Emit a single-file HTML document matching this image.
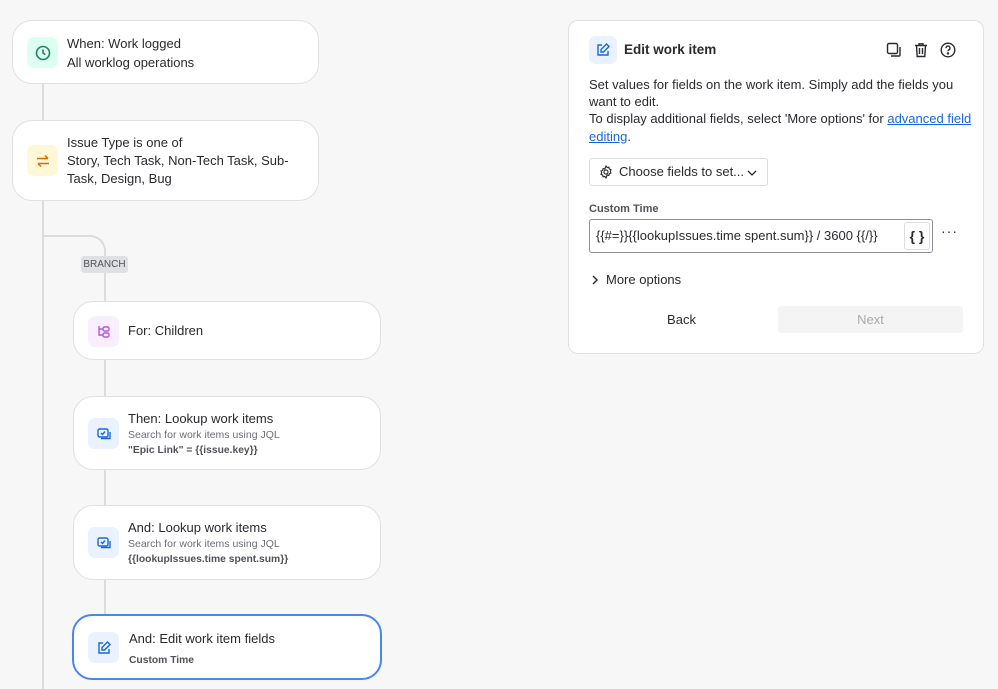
<!DOCTYPE html>
<html><head><style>
*{box-sizing:border-box;margin:0;padding:0}
body{width:998px;height:689px;background:#f7f7f7;font-family:"Liberation Sans",sans-serif;color:#292a2e;position:relative;overflow:hidden}
.line{position:absolute;background:#dcdcdc}
.card{position:absolute;background:#fff;border:1px solid #e0e0e0;border-radius:20px}
.ic{position:absolute;width:31px;height:31px;border-radius:7px;display:flex;align-items:center;justify-content:center}
.t{position:absolute;font-size:13px;line-height:18px}
.s{font-size:10.5px;color:#6b6e76;line-height:15px}
.b{font-size:10.3px;font-weight:bold;color:#505258;line-height:15px}
</style></head><body>
<div class="line" style="left:42px;top:84px;width:2px;height:605px"></div>
<div style="position:absolute;left:43px;top:235px;width:63px;height:40px;border-top:2px solid #dcdcdc;border-right:2px solid #dcdcdc;border-top-right-radius:16px"></div>
<div class="line" style="left:104px;top:270px;width:2px;height:345px"></div>
<div style="position:absolute;left:81px;top:256px;width:47px;height:17px;background:#dfe0e2;border-radius:3px;font-size:10px;color:#505258;text-align:center;line-height:17px">BRANCH</div>

<div class="card" style="left:12px;top:20px;width:307px;height:64px">
<div class="ic" style="left:14px;top:16px;background:#dcfff1"><svg width="16" height="16" viewBox="0 0 16 16" fill="none" stroke="#1f845a" stroke-width="1.6"><circle cx="8" cy="8" r="6.5"/><path d="M8 4.5V8l2.3 1.6"/></svg></div>
<div class="t" style="left:54px;top:13px;line-height:19px">When: Work logged<br>All worklog operations</div></div>

<div class="card" style="left:12px;top:120px;width:307px;height:81px">
<div class="ic" style="left:14px;top:24px;background:#fff7d6"><svg width="16" height="16" viewBox="0 0 16 16" fill="none" stroke="#e06c00" stroke-width="1.5"><path d="M2 5.5h11M10 2.5l3 3M14 10.5H3M6 13.5l-3-3"/></svg></div>
<div class="t" style="left:54px;top:13px">Issue Type is one of<br>Story, Tech Task, Non-Tech Task, Sub-<br>Task, Design, Bug</div></div>

<div class="card" style="left:73px;top:301px;width:308px;height:59px">
<div class="ic" style="left:14px;top:14px;background:#f8eefe"><svg width="16" height="16" viewBox="0 0 16 16" fill="none" stroke="#af59e1" stroke-width="1.4"><path d="M3 2v9h4M3 5h4"/><rect x="7" y="3" width="6" height="4" rx="1.5"/><rect x="7" y="9" width="6" height="4" rx="1.5"/></svg></div>
<div class="t" style="left:54px;top:20px">For: Children</div></div>

<div class="card" style="left:73px;top:396px;width:308px;height:74px">
<div class="ic" style="left:14px;top:21px;background:#e9f2fe"><svg width="16" height="16" viewBox="0 0 16 16" fill="none" stroke="#1868db" stroke-width="1.4"><rect x="2" y="3" width="10" height="8" rx="1.5"/><path d="M5 7l1.5 1.5L9 5.5M14 6v6.5H5"/></svg></div>
<div class="t" style="left:54px;top:13px">Then: Lookup work items<div class="s">Search for work items using JQL</div><div class="b">"Epic Link" = {{issue.key}}</div></div></div>

<div class="card" style="left:73px;top:505px;width:308px;height:75px">
<div class="ic" style="left:14px;top:21px;background:#e9f2fe"><svg width="16" height="16" viewBox="0 0 16 16" fill="none" stroke="#1868db" stroke-width="1.4"><rect x="2" y="3" width="10" height="8" rx="1.5"/><path d="M5 7l1.5 1.5L9 5.5M14 6v6.5H5"/></svg></div>
<div class="t" style="left:54px;top:13px">And: Lookup work items<div class="s">Search for work items using JQL</div><div class="b">{{lookupIssues.time spent.sum}}</div></div></div>

<div class="card" style="left:72px;top:614px;width:310px;height:66px;border:2px solid #4688ec">
<div class="ic" style="left:14px;top:16px;background:#e9f2fe"><svg width="16" height="16" viewBox="0 0 16 16" fill="none" stroke="#1868db" stroke-width="1.4"><path d="M7 3H3v10h10V9"/><path d="M11.5 2l2.5 2.5L8.5 10H6V7.5z"/></svg></div>
<div class="t" style="left:55px;top:14px">And: Edit work item fields<div class="b" style="margin-top:5px">Custom Time</div></div></div>

<div class="card" style="left:568px;top:20px;width:416px;height:334px;border-radius:10px">
<div class="ic" style="left:20px;top:15px;width:28px;height:28px;background:#e9f2fe"><svg width="16" height="16" viewBox="0 0 16 16" fill="none" stroke="#1868db" stroke-width="1.4"><path d="M7 3H3v10h10V9"/><path d="M11.5 2l2.5 2.5L8.5 10H6V7.5z"/></svg></div>
<div style="position:absolute;left:55px;top:21px;font-size:13.5px;font-weight:bold">Edit work item</div>
<svg style="position:absolute;left:317px;top:21px" width="16" height="16" viewBox="0 0 16 16" fill="none" stroke="#292a2e" stroke-width="1.4"><rect x="1.5" y="1.5" width="10" height="10" rx="1.5"/><path d="M14 5v8a1 1 0 0 1-1 1H5"/></svg>
<svg style="position:absolute;left:344px;top:21px" width="16" height="16" viewBox="0 0 16 16" fill="none" stroke="#292a2e" stroke-width="1.4"><path d="M2 3.5h12M6 3.5V1.8h4v1.7M3.5 3.5l.7 11h7.6l.7-11M6.5 6v6M9.5 6v6"/></svg>
<svg style="position:absolute;left:371px;top:21px" width="16" height="16" viewBox="0 0 16 16" fill="none" stroke="#292a2e" stroke-width="1.4"><circle cx="8" cy="8" r="6.8"/><path d="M6 6.2a2 2 0 1 1 2.6 1.8c-.5.2-.6.6-.6 1.2"/><circle cx="8" cy="11.5" r=".5" fill="#292a2e"/></svg>
<div style="position:absolute;left:20px;top:55px;width:386px;font-size:13px;line-height:17.2px">Set values for fields on the work item. Simply add the fields you want to edit.<br>To display additional fields, select 'More options' for <span style="color:#1868db;text-decoration:underline">advanced field</span> <span style="color:#1868db;text-decoration:underline">editing</span>.</div>
<div style="position:absolute;left:20px;top:137px;width:179px;height:28px;border:1px solid #dcdcdc;border-radius:3px;font-size:13px;line-height:26px;padding-left:29px">Choose fields to set...
<svg style="position:absolute;left:9px;top:6px" width="14" height="14" viewBox="0 0 16 16" fill="none" stroke="#292a2e" stroke-width="1.3"><circle cx="8" cy="8" r="2.3"/><path d="M8 1.3l1.3 1.6 2-.4.5 2 1.9.8-.8 1.9.8 1.9-1.9.8-.5 2-2-.4L8 14.7l-1.3-1.6-2 .4-.5-2-1.9-.8.8-1.9-.8-1.9 1.9-.8.5-2 2 .4z"/></svg>
<svg style="position:absolute;left:157px;top:10px" width="10" height="8" viewBox="0 0 10 8" fill="none" stroke="#292a2e" stroke-width="1.3"><path d="M1 2l4 4 4-4"/></svg></div>
<div style="position:absolute;left:20px;top:182px;font-size:11px;font-weight:bold;color:#505258">Custom Time</div>
<div style="position:absolute;left:20px;top:198px;width:344px;height:34px;border:1px solid #8c8f97;border-radius:3px;font-size:13px;line-height:32px;padding-left:6px">{{#=}}{{lookupIssues.time spent.sum}} / 3600 {{/}}
<div style="position:absolute;right:2px;top:2px;width:26px;height:28px;border:1px solid #dcdcdc;border-radius:3px;text-align:center;line-height:26px;font-size:14px;font-weight:bold">{ }</div></div>
<div style="position:absolute;left:372px;top:202px;font-size:14px;letter-spacing:1px">···</div>
<svg style="position:absolute;left:22px;top:253px" width="8" height="12" viewBox="0 0 8 12" fill="none" stroke="#292a2e" stroke-width="1.4"><path d="M2 2l4 4-4 4"/></svg>
<div style="position:absolute;left:37px;top:251px;font-size:13px">More options</div>
<div style="position:absolute;left:20px;top:285px;width:185px;height:27px;text-align:center;line-height:27px;font-size:13px">Back</div>
<div style="position:absolute;left:209px;top:285px;width:185px;height:27px;background:#f4f4f4;border-radius:3px;text-align:center;line-height:27px;font-size:13px;color:#a8aab0">Next</div>
</div>
</body></html>
